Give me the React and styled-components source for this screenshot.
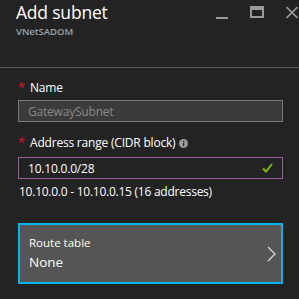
import styled, { createGlobalStyle } from "styled-components";

const Global = createGlobalStyle`
  html, body {
    margin: 0;
    padding: 0;
    background: #232323;
  }
  body {
    font-family: "Open Sans", "Noto Sans", sans-serif;
    color: #fff;
  }
`

const Blade = styled.div`
  width: 299px;
  height: 299px;
  overflow: hidden;
  background: #232323;
`

const Header = styled.header`
  display: flex;
  justify-content: space-between;
  align-items: flex-start;
  height: 68px;
  border-bottom: 1px solid #5a5a5a;
  box-sizing: border-box;
  padding-left: 16px;
`

const Titles = styled.div`
  display: flex;
  flex-direction: column;
`

const Title = styled.h1`
  margin: 0;
  font-size: 17.5px;
  font-weight: 400;
  line-height: 25px;
  letter-spacing: -0.2px;
  color: #fff;
`

const Subtitle = styled.div`
  font-size: 9.5px;
  font-weight: 600;
  color: #9aa3ad;
  line-height: 12px;
  margin-top: 1px;
`

const Controls = styled.div`
  display: flex;
  align-items: flex-start;
  gap: 22px;
  padding: 6px 1px 0 0;
`

const ControlBtn = styled.div`
  height: 14px;
  display: flex;
  align-items: center;
`

const Body = styled.div`
  padding: 12px 16px 0 18px;
  display: flex;
  flex-direction: column;
`

const Field = styled.div`
  display: flex;
  flex-direction: column;
  margin-bottom: ${({ $gap }) => $gap || 0}px;
`

const Label = styled.label`
  display: flex;
  align-items: center;
  font-size: 12px;
  letter-spacing: -0.2px;
  line-height: 16px;
  color: #fff;
  margin-bottom: ${({ $space }) => $space ?? 4}px;
`

const Star = styled.span`
  color: #e81123;
  font-size: 13px;
  width: 12px;
  margin-top: -3px;
`

const Input = styled.div`
  height: 22px;
  box-sizing: border-box;
  border: 1px solid ${({ $accent }) => $accent || "#7a7a7a"};
  background: ${({ $bg }) => $bg || "#3b3b3b"};
  color: ${({ $muted }) => ($muted ? "#8a8a8a" : "#fff")};
  font-size: 12px;
  letter-spacing: -0.2px;
  padding: 0 9px;
  display: flex;
  align-items: center;
  justify-content: space-between;
`

const Hint = styled.div`
  font-size: 12px;
  letter-spacing: -0.25px;
  line-height: 16px;
  color: #fff;
  margin-top: 5px;
  padding-left: 1px;
`

const Picker = styled.div`
  margin-top: 23px;
  height: 61px;
  box-sizing: border-box;
  border: 2px solid #00b4f0;
  background: #555555;
  padding: 0 0 0 9px;
  display: flex;
  align-items: center;
  justify-content: space-between;
`

const PickerText = styled.div`
  display: flex;
  flex-direction: column;
`

const PickerLabel = styled.div`
  font-size: 11.5px;
  line-height: 16px;
  color: #fff;
`

const PickerValue = styled.div`
  font-size: 13.5px;
  line-height: 22px;
  color: #fff;
`

function App() {
  return (
    <Blade>
      <Global />
      <Header>
        <Titles>
          <Title>Add subnet</Title>
          <Subtitle>VNetSADOM</Subtitle>
        </Titles>
        <Controls>
          <ControlBtn>
            <svg width="12" height="14" viewBox="0 0 12 14">
              <rect x="0" y="11" width="12" height="2" fill="#9a9a9a" />
            </svg>
          </ControlBtn>
          <ControlBtn>
            <svg width="14" height="14" viewBox="0 0 14 14">
              <rect x="1" y="1" width="12" height="10" fill="none" stroke="#9a9a9a" strokeWidth="2" />
              <rect x="1" y="1" width="12" height="3" fill="#9a9a9a" />
            </svg>
          </ControlBtn>
          <ControlBtn>
            <svg width="12" height="14" viewBox="0 0 12 14">
              <path d="M0.5 1 L11.5 12 M11.5 1 L0.5 12" stroke="#9a9a9a" strokeWidth="1.6" />
            </svg>
          </ControlBtn>
        </Controls>
      </Header>
      <Body>
        <Field $gap={13}>
          <Label><Star>*</Star>Name</Label>
          <Input $muted>GatewaySubnet</Input>
        </Field>
        <Field>
          <Label $space={6}>
            <Star>*</Star>Address range (CIDR block)
            <svg width="9" height="9" viewBox="0 0 9 9" style={{ marginLeft: 4 }}>
              <circle cx="4.5" cy="4.5" r="4.5" fill="#9a9a9a" />
              <rect x="4" y="4" width="1.2" height="3" fill="#232323" />
              <rect x="4" y="2" width="1.2" height="1.2" fill="#232323" />
            </svg>
          </Label>
          <Input $accent="#a05ca0" $bg="#232323">
            <span>10.10.0.0/28</span>
            <svg width="11" height="10" viewBox="0 0 11 10">
              <path d="M1 5.5 L4 8.5 L10 1" fill="none" stroke="#7fba00" strokeWidth="2" />
            </svg>
          </Input>
          <Hint>10.10.0.0 - 10.10.0.15 (16 addresses)</Hint>
        </Field>
        <Picker>
          <PickerText>
            <PickerLabel>Route table</PickerLabel>
            <PickerValue>None</PickerValue>
          </PickerText>
          <svg width="14" height="16" viewBox="0 0 14 16" style={{ marginRight: 1 }}>
            <path d="M2 1 L9 8 L2 15" fill="none" stroke="#e0e0e0" strokeWidth="1.2" />
          </svg>
        </Picker>
      </Body>
    </Blade>
  )
}

export default App
